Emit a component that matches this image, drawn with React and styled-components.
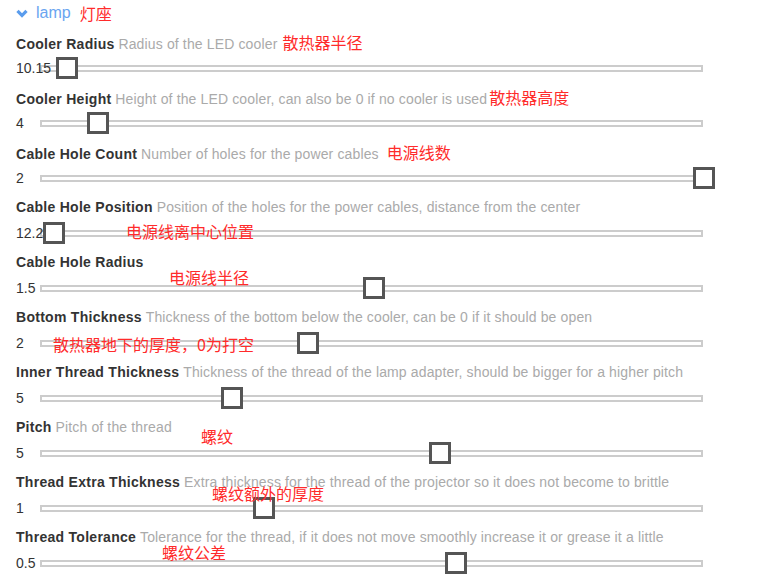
import React from "react";
import styled, { createGlobalStyle } from "styled-components";

const GlobalStyle = createGlobalStyle`
  body {
    margin: 0;
    background: #fff;
    font-family: "Liberation Sans", Arial, "Noto Sans CJK SC", sans-serif;
    font-size: 14px;
    color: #333;
  }
`;

const params = [
  { name: "Cooler Radius", desc: "Radius of the LED cooler", value: "10.15", pos: 0.0245, note: "散热器半径", noteGap: 5 },
  { name: "Cooler Height", desc: "Height of the LED cooler, can also be 0 if no cooler is used", value: "4", pos: 0.072, note: "散热器高度", noteGap: 2 },
  { name: "Cable Hole Count", desc: "Number of holes for the power cables", value: "2", pos: 1, note: "电源线数", noteGap: 8 },
  { name: "Cable Hole Position", desc: "Position of the holes for the power cables, distance from the center", value: "12.2", pos: 0.0046, overlay: { text: "电源线离中心位置", left: 110, top: 26 } },
  { name: "Cable Hole Radius", desc: "", value: "1.5", pos: 0.4946, overlay: { text: "电源线半径", left: 153, top: 17 } },
  { name: "Bottom Thickness", desc: "Thickness of the bottom below the cooler, can be 0 if it should be open", value: "2", pos: 0.3936, overlay: { text: "散热器地下的厚度，0为打空", left: 37, top: 29 } },
  { name: "Inner Thread Thickness", desc: "Thickness of the thread of the lamp adapter, should be bigger for a higher pitch", value: "5", pos: 0.2772 },
  { name: "Pitch", desc: "Pitch of the thread", value: "5", pos: 0.5957, overlay: { text: "螺纹", left: 185, top: 11 } },
  { name: "Thread Extra Thickness", desc: "Extra thickness for the thread of the projector so it does not become to brittle", value: "1", pos: 0.3262, overlay: { text: "螺纹额外的厚度", left: 196, top: 13 } },
  { name: "Thread Tolerance", desc: "Tolerance for the thread, if it does not move smoothly increase it or grease it a little", value: "0.5", pos: 0.6202, overlay: { text: "螺纹公差", left: 146, top: 17 } },
];

function Chevron() {
  return (
    <svg width="12" height="9" viewBox="0 0 12 9">
      <polyline points="1.5,1.8 6,6.5 10.5,1.8" fill="none" stroke="#5a9ced" strokeWidth="3.2" />
    </svg>
  );
}

function Slider({ value, pos }) {
  return (
    <SliderLine>
      <Value>{value}</Value>
      <TrackArea>
        <Rail />
        <Thumb style={{ left: `calc(${pos} * (100% - 10px))` }} />
      </TrackArea>
    </SliderLine>
  );
}

export default function App() {
  return (
    <Page>
      <GlobalStyle />
      <Header>
        <Chevron />
        <GroupTitle>lamp</GroupTitle>
        <Note $gap={9}>灯座</Note>
      </Header>
      {params.map((p) => (
        <Row key={p.name}>
          <LabelLine>
            <Name>{p.name}</Name> <Desc>{p.desc}</Desc>
            {p.note ? <Note $gap={p.noteGap}>{p.note}</Note> : null}
          </LabelLine>
          <Slider value={p.value} pos={p.pos} />
          {p.overlay ? (
            <OverlayNote $left={p.overlay.left} $top={p.overlay.top}>
              {p.overlay.text}
            </OverlayNote>
          ) : null}
        </Row>
      ))}
    </Page>
  );
}

const Page = styled.div`
  padding: 4px 16px 0 16px;
`;

const Header = styled.div`
  display: flex;
  align-items: center;
  height: 18px;
  margin-bottom: 10px;
  svg {
    margin-right: 8px;
    flex: none;
  }
`;

const GroupTitle = styled.span`
  font-size: 16px;
  line-height: 18px;
  color: #6aa5f0;
`;

const Note = styled.span`
  margin-left: ${(p) => p.$gap}px;
  font-family: "Noto Sans CJK SC", sans-serif;
  font-size: 16px;
  letter-spacing: 0;
  color: #ff2b2b;
  white-space: nowrap;
`;

const Row = styled.div`
  position: relative;
  height: 55px;
  box-sizing: border-box;
`;

const LabelLine = styled.div`
  height: 20px;
  line-height: 20px;
  white-space: nowrap;
`;

const Name = styled.span`
  font-weight: bold;
  letter-spacing: 0.28px;
  color: #333;
`;

const Desc = styled.span`
  letter-spacing: 0.14px;
  color: #aaa;
`;

const SliderLine = styled.div`
  display: flex;
  align-items: center;
  height: 22px;
  margin-top: 5px;
`;

const Value = styled.div`
  flex: 0 0 24px;
  width: 24px;
  line-height: 22px;
  white-space: nowrap;
  color: #333;
  position: relative;
  z-index: 1;
`;

const TrackArea = styled.div`
  position: relative;
  width: 663px;
  height: 22px;
  display: flex;
  align-items: center;
`;

const Rail = styled.div`
  width: 100%;
  height: 7px;
  box-sizing: border-box;
  border: 2px solid #ccc;
  background: transparent;
`;

const Thumb = styled.div`
  position: absolute;
  top: 0;
  width: 22px;
  height: 22px;
  box-sizing: border-box;
  border: 3px solid #555;
  background: #fff;
  z-index: 2;
`;

const OverlayNote = styled.div`
  position: absolute;
  left: ${(p) => p.$left}px;
  top: ${(p) => p.$top}px;
  line-height: 16px;
  font-family: "Noto Sans CJK SC", sans-serif;
  font-size: 16px;
  color: #ff2b2b;
  white-space: nowrap;
  z-index: 3;
`;
